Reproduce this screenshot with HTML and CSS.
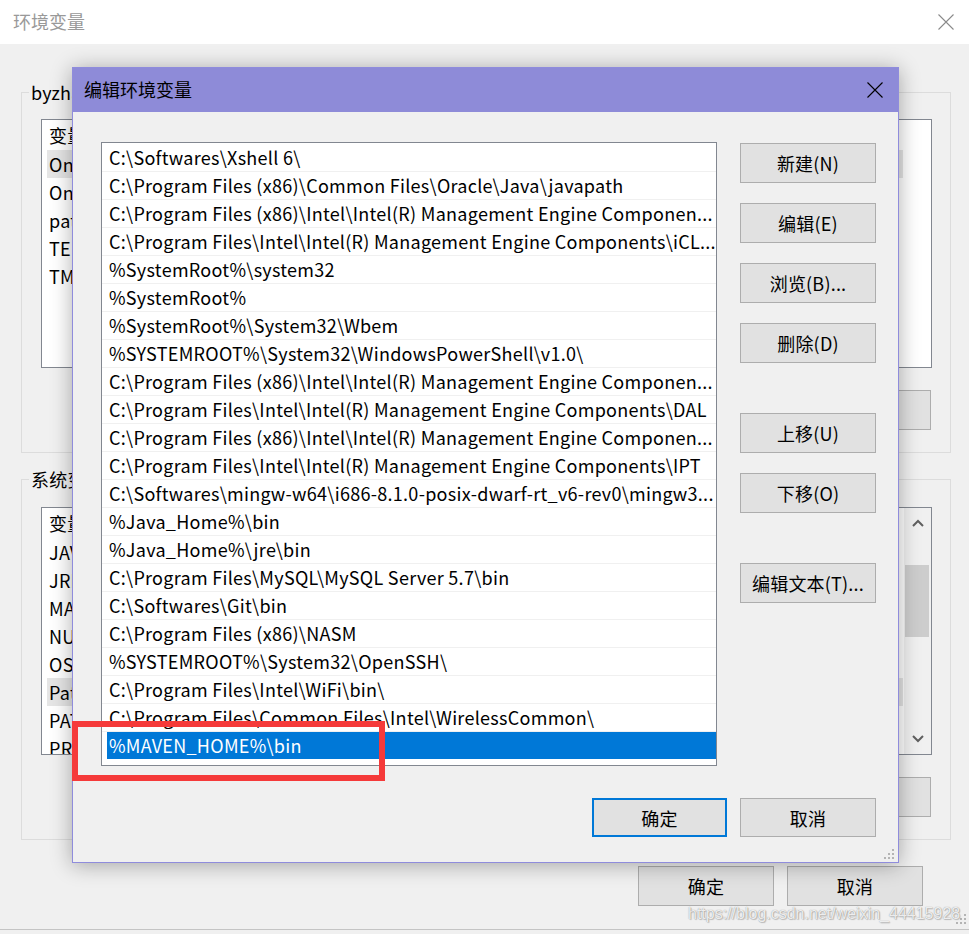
FILE: index.html
```html
<!DOCTYPE html>
<html lang="zh-CN">
<head>
<meta charset="utf-8">
<title>编辑环境变量</title>
<link rel="stylesheet" href="styles.css">
</head>
<body>
<div class="bgwin">
  <div class="bg-title">
    <span class="bg-title-text">环境变量</span>
    <svg class="bg-close" viewBox="0 0 16 16" width="16" height="16"><path d="M0.5 0.5 L15.5 15.5 M15.5 0.5 L0.5 15.5" stroke="#8a8a8a" stroke-width="1.1" fill="none"/></svg>
  </div>
  <div class="bg-body">
    <fieldset class="group g-user">
      <legend>byzhang 的用户变量(U)</legend>
      <div class="group-inner">
        <div class="vlist v-user">
          <div class="vrows">
            <div class="vhead">变量</div>
            <div class="vrow hl">OneDrive</div>
            <div class="vrow">OneDriveConsumer</div>
            <div class="vrow">path</div>
            <div class="vrow">TEMP</div>
            <div class="vrow">TMP</div>
          </div>
        </div>
        <div class="grp-btns">
          <button class="btn">新建(N)...</button>
          <button class="btn">编辑(E)...</button>
          <button class="btn">删除(D)</button>
        </div>
      </div>
    </fieldset>
    <fieldset class="group g-sys">
      <legend>系统变量(S)</legend>
      <div class="group-inner">
        <div class="vlist v-sys">
          <div class="vrows">
            <div class="vhead">变量</div>
            <div class="vrow">JAVA_HOME</div>
            <div class="vrow">JRE_HOME</div>
            <div class="vrow">MAVEN_HOME</div>
            <div class="vrow">NUMBER_OF_PROCESSORS</div>
            <div class="vrow">OS</div>
            <div class="vrow hl">Path</div>
            <div class="vrow">PATHEXT</div>
            <div class="vrow">PROCESSOR_ARCHITECTURE</div>
          </div>
          <div class="vscroll">
            <div class="sb-arrow"><svg viewBox="0 0 12 8" width="12" height="8"><polyline points="1,7 6,2 11,7" fill="none" stroke="#606060" stroke-width="2"/></svg></div>
            <div class="sb-track"><div class="sb-thumb"></div></div>
            <div class="sb-arrow"><svg viewBox="0 0 12 8" width="12" height="8"><polyline points="1,1 6,6 11,1" fill="none" stroke="#606060" stroke-width="2"/></svg></div>
          </div>
        </div>
        <div class="grp-btns">
          <button class="btn">新建(W)...</button>
          <button class="btn">编辑(I)...</button>
          <button class="btn">删除(L)</button>
        </div>
      </div>
    </fieldset>
    <div class="bg-footer">
      <button class="btn">确定</button>
      <button class="btn">取消</button>
    </div>
  </div>
  <svg class="grip bg-grip" viewBox="0 0 12 12" width="12" height="12"><g fill="#b4b4b4"><rect x="9" y="1" width="2" height="2"/><rect x="5" y="5" width="2" height="2"/><rect x="9" y="5" width="2" height="2"/><rect x="1" y="9" width="2" height="2"/><rect x="5" y="9" width="2" height="2"/><rect x="9" y="9" width="2" height="2"/></g></svg>
</div>

<div class="dialog">
  <div class="dlg-title">
    <span>编辑环境变量</span>
    <svg class="dlg-close" viewBox="0 0 16 16" width="16" height="16"><path d="M0.5 0.5 L15.5 15.5 M15.5 0.5 L0.5 15.5" stroke="#000" stroke-width="1.1" fill="none"/></svg>
  </div>
  <div class="dlg-body">
    <div class="dlg-main">
      <div class="plist">
        <div class="prow">C:\Softwares\Xshell 6\</div>
        <div class="prow">C:\Program Files (x86)\Common Files\Oracle\Java\javapath</div>
        <div class="prow">C:\Program Files (x86)\Intel\Intel(R) Management Engine Componen...</div>
        <div class="prow">C:\Program Files\Intel\Intel(R) Management Engine Components\iCL...</div>
        <div class="prow">%SystemRoot%\system32</div>
        <div class="prow">%SystemRoot%</div>
        <div class="prow">%SystemRoot%\System32\Wbem</div>
        <div class="prow">%SYSTEMROOT%\System32\WindowsPowerShell\v1.0\</div>
        <div class="prow">C:\Program Files (x86)\Intel\Intel(R) Management Engine Componen...</div>
        <div class="prow">C:\Program Files\Intel\Intel(R) Management Engine Components\DAL</div>
        <div class="prow">C:\Program Files (x86)\Intel\Intel(R) Management Engine Componen...</div>
        <div class="prow">C:\Program Files\Intel\Intel(R) Management Engine Components\IPT</div>
        <div class="prow">C:\Softwares\mingw-w64\i686-8.1.0-posix-dwarf-rt_v6-rev0\mingw3...</div>
        <div class="prow">%Java_Home%\bin</div>
        <div class="prow">%Java_Home%\jre\bin</div>
        <div class="prow">C:\Program Files\MySQL\MySQL Server 5.7\bin</div>
        <div class="prow">C:\Softwares\Git\bin</div>
        <div class="prow">C:\Program Files (x86)\NASM</div>
        <div class="prow">%SYSTEMROOT%\System32\OpenSSH\</div>
        <div class="prow">C:\Program Files\Intel\WiFi\bin\</div>
        <div class="prow">C:\Program Files\Common Files\Intel\WirelessCommon\</div>
        <div class="prow edit"><span class="edit-box">%MAVEN_HOME%\bin</span></div>
      </div>
      <div class="side">
        <button class="btn">新建(N)</button>
        <button class="btn">编辑(E)</button>
        <button class="btn">浏览(B)...</button>
        <button class="btn">删除(D)</button>
        <button class="btn gap">上移(U)</button>
        <button class="btn">下移(O)</button>
        <button class="btn gap">编辑文本(T)...</button>
      </div>
    </div>
    <div class="dlg-foot">
      <button class="btn ok">确定</button>
      <button class="btn">取消</button>
    </div>
  </div>
  <svg class="grip dlg-grip" viewBox="0 0 12 12" width="12" height="12"><g fill="#b4b4b4"><rect x="9" y="1" width="2" height="2"/><rect x="5" y="5" width="2" height="2"/><rect x="9" y="5" width="2" height="2"/><rect x="1" y="9" width="2" height="2"/><rect x="5" y="9" width="2" height="2"/><rect x="9" y="9" width="2" height="2"/></g></svg>
</div>

<div class="redbox"></div>
<div class="watermark">https://blog.csdn.net/weixin_44415928</div>
</body>
</html>
```

FILE: styles.css
```css
* { box-sizing: border-box; }
html, body { margin: 0; padding: 0; }
body {
  width: 969px;
  height: 934px;
  overflow: hidden;
  position: relative;
  background: #f0f0f0;
  font-family: "Noto Sans CJK SC", "Noto Sans", sans-serif;
  font-size: 18px;
  color: #000;
}

/* ---------- background window ---------- */
.bgwin {
  position: relative;
  height: 930px;
  background: #f0f0f0;
  border-bottom: 1px solid #c4c4c4;
  display: flex;
  flex-direction: column;
}
.bg-title {
  height: 44px;
  flex: none;
  background: #fff;
  display: flex;
  align-items: center;
  justify-content: space-between;
  padding: 0 15px 2px 13px;
}
.bg-title-text { color: #999; line-height: 24px; }
.bg-close { display: block; margin-top: 2px; }

.bg-body {
  padding: 36px 18px 0 21px;
  display: flex;
  flex-direction: column;
}
.group {
  margin: 0;
  padding: 0;
  min-width: 0;
  border: 1px solid #dcdcdc;
}
.group legend {
  margin-left: 7px;
  padding: 0 2px;
  line-height: 24px;
  white-space: nowrap;
  letter-spacing: 0.2px;
}
.group-inner { padding: 15px 18px 22px 19px; }
.g-sys { margin-top: 14px; }
.g-sys .group-inner { padding-top: 16px; }

.vlist {
  background: #fff;
  border: 1px solid #828790;
  height: 249px;
  overflow: hidden;
  display: flex;
}
.v-sys { height: 248px; }
.vrows { flex: 1; min-width: 0; }
.vhead, .vrow {
  height: 28px;
  line-height: 28px;
  padding-left: 7px;
  white-space: nowrap;
  overflow: hidden;
  letter-spacing: 0.28px;
}
.vhead { height: 30px; line-height: 30px; }
.vrow.hl {
  background: #e5e5e5;
  margin-left: 5px;
  padding-left: 2px;
  margin-right: 28px;
}
.v-sys .vrow.hl { margin-right: 1px; }

.vscroll {
  width: 27px;
  flex: none;
  background: #f0f0f0;
  display: flex;
  flex-direction: column;
}
.sb-arrow {
  height: 30px;
  display: flex;
  align-items: center;
  justify-content: center;
}
.sb-track { flex: 1; padding: 27px 2px 0 1px; }
.sb-thumb { height: 72px; background: #cdcdcd; }

.grp-btns {
  display: flex;
  justify-content: flex-end;
  gap: 14px;
  margin-top: 22px;
  padding-right: 1px;
}

.btn {
  width: 136px;
  height: 40px;
  margin: 0;
  padding: 0;
  background: #e1e1e1;
  border: 1px solid #adadad;
  font-family: inherit;
  font-size: 18px;
  line-height: 1;
  letter-spacing: 0.2px;
  color: #000;
  display: flex;
  align-items: center;
  justify-content: center;
  flex: none;
}

.bg-footer {
  display: flex;
  justify-content: flex-end;
  gap: 13px;
  margin-top: 26px;
  padding-right: 28px;
}

.grip { position: absolute; display: block; }
.bg-grip { right: 2px; bottom: 4px; }

/* ---------- dialog ---------- */
.dialog {
  position: absolute;
  left: 72px;
  top: 67px;
  width: 827px;
  height: 796px;
  border: 1px solid #8f8cdc;
  background: #f0f0f0;
  box-shadow: 0 2px 20px rgba(0, 0, 0, 0.32);
  display: flex;
  flex-direction: column;
}
.dlg-title {
  height: 44px;
  flex: none;
  background: #8e8bd8;
  display: flex;
  align-items: center;
  justify-content: space-between;
  padding: 0 15px 3px 11px;
  line-height: 24px;
}
.dlg-close { display: block; margin-top: 3px; }

.dlg-body {
  flex: 1;
  padding: 30px 22px 0 28px;
  display: flex;
  flex-direction: column;
}
.dlg-main { display: flex; gap: 23px; }
.plist {
  width: 616px;
  height: 624px;
  flex: none;
  background: #fff;
  border: 1px solid #828790;
  padding-top: 1px;
  overflow: hidden;
}
.prow {
  height: 28px;
  line-height: 27px;
  border-bottom: 1px solid #f0f0f0;
  padding-left: 7px;
  white-space: nowrap;
  overflow: hidden;
  letter-spacing: 0.28px;
}
.prow.edit { padding-left: 5px; border-bottom-color: #fff; overflow: visible; }
.edit-box {
  display: block;
  height: 27px;
  line-height: 27px;
  background: #0078d7;
  color: #fff;
  padding-left: 2px;
}

.side {
  display: flex;
  flex-direction: column;
  gap: 20px;
  padding-top: 1px;
}
.side .gap { margin-top: 30px; }

.dlg-foot {
  display: flex;
  justify-content: flex-end;
  gap: 13px;
  margin-top: 32px;
}
.dlg-foot .btn { height: 39px; }
.dlg-foot .ok { width: 135px; border: 2px solid #0078d7; }
.dlg-grip { right: 3px; bottom: 2px; }

/* ---------- annotations ---------- */
.redbox {
  position: absolute;
  left: 72px;
  top: 721px;
  width: 313px;
  height: 60px;
  border: 6px solid #f53a3a;
}
.watermark {
  position: absolute;
  left: 688px;
  top: 904px;
  font-family: "Liberation Sans", Arial, sans-serif;
  font-size: 16px;
  line-height: 20px;
  color: rgba(255, 255, 255, 0.85);
  text-shadow: 0 0 1px rgba(90, 90, 90, 0.7), 1px 1px 1px rgba(120, 120, 120, 0.4);
  white-space: nowrap;
}
```
